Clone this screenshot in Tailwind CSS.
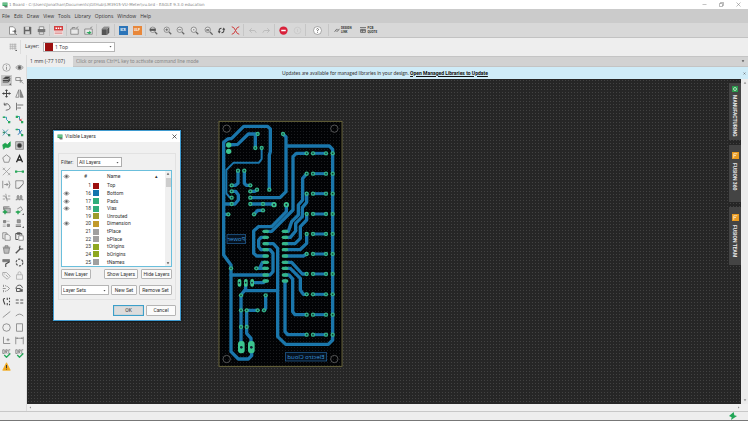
<!DOCTYPE html>
<html lang="en">
<head>
<meta charset="utf-8">
<title>1 Board - EAGLE 9.3.0 education</title>
<script src="https://cdn.jsdelivr.net/npm/@tailwindcss/browser@4"></script>
</head>
<body class="flex h-screen flex-col overflow-hidden bg-[#eeeeee] font-['Open_Sans',sans-serif] text-[5px] leading-[7px] text-[#333]">

<!-- shared symbols -->
<svg class="hidden">
  <symbol id="eye" viewBox="0 0 12 12"><path d="M1 6Q6 0 11 6Q6 12 1 6Z" fill="#ddd" stroke="#888"/><circle cx="6" cy="6" r="2" fill="#555"/></symbol>
  <symbol id="mag" viewBox="0 0 12 12"><circle cx="5" cy="5" r="3.6" fill="#e6e6e6" stroke="#777"/><path d="M8 8l3 3" stroke="#666" stroke-width="1.6"/></symbol>
  <symbol id="caret" viewBox="0 0 6 6"><path d="M1 2h4L3 5z" fill="#555"/></symbol>
  <symbol id="app" viewBox="0 0 12 12"><rect x="1" y="1" width="10" height="7" fill="#3aa564"/><path d="M2 3h8M2 5h8" stroke="#9bd8b1"/><path d="M4 8h7v3H6z" fill="#777"/></symbol>
  <symbol id="check" viewBox="0 0 12 12"><path d="M1 1v5h2V1zM5 6V1h2v2H5l2 3M11 1H9v5h2" fill="none" stroke="#777"/><path d="M3 8l3 3 5-5" fill="none" stroke="#25a95a" stroke-width="1.8"/></symbol>
</svg>

<header class="flex h-[9px] shrink-0 items-center bg-white pl-[2px] text-[#888]">
  <svg class="mr-px size-[6px]"><use href="#app"/></svg>
  <h1 class="font-['DejaVu_Sans',sans-serif] text-[4px] whitespace-nowrap">1 Board - C:\Users\Jonathan\Documents\GitHub\LM3915-VU-Meter\vu.brd - EAGLE 9.3.0 education</h1>
  <div class="ml-auto flex items-center gap-[12px] pr-[7px]">
    <button aria-label="Minimize"><svg class="size-[5px]" viewBox="0 0 10 10"><path d="M1 5h8" stroke="#888"/></svg></button>
    <button aria-label="Restore"><svg class="size-[5px]" viewBox="0 0 10 10"><path d="M1 3h6v6H1zM3 3V1h6v6H7" fill="none" stroke="#777"/></svg></button>
    <button aria-label="Close"><svg class="size-[5px]" viewBox="0 0 10 10"><path d="M1 1l8 8M9 1l-8 8" stroke="#777"/></svg></button>
  </div>
</header>

<nav class="flex h-[14px] shrink-0 items-center gap-[4px] bg-[#cbcbcb] pl-[2px]">
  <a href="#">File</a><a href="#">Edit</a><a href="#">Draw</a><a href="#">View</a><a href="#">Tools</a><a href="#">Library</a><a href="#">Options</a><a href="#">Window</a><a href="#">Help</a>
</nav>

<div class="flex h-[15px] shrink-0 items-center border-b border-[#c2c2c2] bg-[#d8d8d8] pl-[6px] [&_svg]:mx-auto">
  <div class="flex w-[42px] justify-between">
    <button class="w-[13px]" aria-label="New"><svg class="size-[9px]" viewBox="0 0 12 12"><path d="M2 1h5l3 3v7H2z" fill="#fff" stroke="#777"/><path d="M6 7h5M9 5v5" stroke="#444"/><path d="M10 11h2v1z" fill="#333"/></svg></button>
    <button class="w-[13px]" aria-label="Save"><svg class="size-[9px]" viewBox="0 0 12 12"><path d="M1 1h9l1 1v9H1z" fill="#666"/><path d="M3 1h5v4H3zM3 7h6v4H3z" fill="#d8d8d8"/></svg></button>
    <button class="w-[13px]" aria-label="Print"><svg class="size-[9px]" viewBox="0 0 12 12"><path d="M3 1h6v4H3zM3 8h6v3H3z" fill="#eee" stroke="#777"/><path d="M1 4h10v4H1z" fill="#777"/></svg></button>
  </div>
  <span class="mx-px h-[12px] w-px bg-[#c6c6c6]"></span>
  <button class="w-[14px]" aria-label="CAM processor"><svg class="size-[9px]" viewBox="0 0 12 12"><rect width="12" height="12" fill="#f3dede"/><rect width="12" height="6" fill="#d43c3c"/><path d="M2 3h2M5 3h2M8 3h2" stroke="#fff" stroke-width="2"/><path d="M1 8h10M1 10h10" stroke="#d88"/></svg></button>
  <span class="mx-px h-[12px] w-px bg-[#c6c6c6]"></span>
  <div class="flex w-[27px] justify-between">
    <button class="w-[13px]" aria-label="Schematic"><svg class="size-[9px]" viewBox="0 0 12 12"><path d="M1 4h10v7H1zM3 4V2h4M8 3l3-2" fill="#e8e8e8" stroke="#777"/></svg></button>
    <button class="w-[13px]" aria-label="Board"><svg class="size-[9px]" viewBox="0 0 12 12"><path d="M1 4h10v7H1zM8 3l3-2" fill="#e8e8e8" stroke="#777"/><path d="M3 8h4V6l3 3-3 2" fill="#2ba85c"/></svg></button>
  </div>
  <span class="mx-px h-[12px] w-px bg-[#c6c6c6]"></span>
  <button class="w-[15px]" aria-label="Library"><svg class="size-[9px]" viewBox="0 0 12 12"><path d="M1 4l3-3h7v8l-3 3H1z" fill="#555"/><path d="M1 4h7v8M8 4l3-3M2 3h7M3 2h7" stroke="#bbb" stroke-width=".7" fill="none"/></svg></button>
  <span class="mx-px h-[12px] w-px bg-[#c6c6c6]"></span>
  <div class="flex w-[28px] justify-between text-[3px] leading-[9px] font-bold text-white">
    <button class="mx-auto h-[9px] w-[9px] bg-[#2b74b8]">SCR</button>
    <button class="mx-auto h-[9px] w-[9px] bg-[#e8873a]">ULP</button>
  </div>
  <span class="mx-px h-[12px] w-px bg-[#c6c6c6]"></span>
  <div class="flex w-[95px] justify-between">
    <button class="w-[13px]" aria-label="Zoom to fit"><svg class="size-[9px]" viewBox="0 0 12 12"><use href="#mag"/><path d="M1 5h8" stroke="#555" stroke-width="3"/></svg></button>
    <button class="w-[13px]" aria-label="Zoom in"><svg class="size-[9px]" viewBox="0 0 12 12"><use href="#mag"/><path d="M3 5h4M5 3v4" stroke="#555"/></svg></button>
    <button class="w-[13px]" aria-label="Zoom out"><svg class="size-[9px]" viewBox="0 0 12 12"><use href="#mag"/><path d="M3 5h4" stroke="#555"/></svg></button>
    <button class="w-[13px]" aria-label="Redraw"><svg class="size-[9px]" viewBox="0 0 12 12"><use href="#mag"/><circle cx="5" cy="5" r="1" fill="#888"/></svg></button>
    <button class="w-[13px]" aria-label="Zoom select"><svg class="size-[9px]" viewBox="0 0 12 12"><use href="#mag"/><path d="M3 4h4v3H3z" fill="#888"/><path d="M10 11h2v1z" fill="#333"/></svg></button>
    <button class="w-[13px]" aria-label="Refresh"><svg class="size-[9px]" viewBox="0 0 12 12"><path d="M6 3Q2 3 3 8M6 9q4 0 3-5" fill="none" stroke="#444" stroke-width="1.4"/><path d="M1 7h4l-2 3zM7 5h4L9 2z" fill="#444"/></svg></button>
    <button class="w-[13px]" aria-label="Cross probe"><svg class="size-[9px]" viewBox="0 0 12 12"><path d="M1 1q3 0 5 5t5 5M11 1Q8 1 6 6t-5 5" fill="none" stroke="#d03a3a" stroke-width="1.3"/></svg></button>
  </div>
  <span class="mx-px h-[12px] w-px bg-[#c6c6c6]"></span>
  <div class="flex w-[28px] justify-between">
    <button class="w-[14px]" aria-label="Undo"><svg class="size-[9px]" viewBox="0 0 12 12"><path d="M5 3L2 6l3 3M2 6h7l2 3" fill="none" stroke="#bbb" stroke-width="1.3"/></svg></button>
    <button class="w-[14px]" aria-label="Redo"><svg class="size-[9px]" viewBox="0 0 12 12"><path d="M7 3l3 3-3 3M10 6H3L1 9" fill="none" stroke="#bbb" stroke-width="1.3"/></svg></button>
  </div>
  <span class="mx-px h-[12px] w-px bg-[#c6c6c6]"></span>
  <div class="flex w-[28px] justify-between">
    <button class="w-[14px]" aria-label="Stop"><svg class="size-[9px]" viewBox="0 0 12 12"><circle cx="6" cy="6" r="5.5" fill="#d8213a"/><path d="M3 6h6" stroke="#fff" stroke-width="2"/></svg></button>
    <button class="w-[14px]" aria-label="Go"><svg class="size-[9px]" viewBox="0 0 12 12"><circle cx="6" cy="6" r="4.5" fill="none" stroke="#c8c8c8"/><path d="M6 4v4" stroke="#c8c8c8"/></svg></button>
  </div>
  <span class="mx-px h-[12px] w-px bg-[#c6c6c6]"></span>
  <button class="w-[20px]" aria-label="Help"><svg class="size-[9px]" viewBox="0 0 12 12"><circle cx="6" cy="6" r="5.3" fill="#fff" stroke="#777" stroke-width=".8"/><path d="M4.500 4.500Q6 2 7.500 4.500Q7 6 6 6v1M6 8v1" fill="none" stroke="#444"/></svg></button>
  <span class="mx-px h-[12px] w-px bg-[#c6c6c6]"></span>
  <button class="ml-[4px] flex items-center gap-px text-left font-['Roboto',sans-serif] text-[3px] leading-[4px] font-bold"><svg class="size-[6px]" viewBox="0 0 10 10"><path d="M1 8l3-4h2M4 7h2l3-4" fill="none" stroke="#666" stroke-width="1.500"/></svg><span>DESIGN<br>LINK</span></button>
  <button class="ml-[8px] flex items-center gap-[2px] text-left font-['Roboto',sans-serif] text-[3px] leading-[4px] font-bold"><svg class="size-[6px]" viewBox="0 0 10 10"><path d="M0 1h10M1 4h8v5H1zM4 4v5M1 6h8" fill="none" stroke="#666" stroke-width="1.500"/></svg><span>PCB<br>QUOTE</span></button>
</div>

<div class="flex h-[17px] shrink-0 items-center pl-[9px]">
  <button aria-label="Grid"><svg class="size-[8px]" viewBox="0 0 12 12"><path d="M1 2h10M1 5h10M1 8h10M2 1v9M5 1v9M8 1v9M10 1v9" stroke="#aaa"/><path d="M9 12h3l-1-2z" fill="#333"/></svg></button>
  <span class="mx-[3px] h-[14px] w-px bg-[#ddd]"></span>
  <label for="layer" class="w-[19px] pl-px">Layer:</label>
  <div class="grid w-[72px] items-center border border-[#b5b5b5] bg-white [&>*]:[grid-area:1/1]">
    <select id="layer" class="h-[8px] appearance-none pl-[11px] leading-[8px]"><option>1 Top</option></select>
    <span class="pointer-events-none ml-px size-[8px] bg-[#9c1010]"></span>
    <svg class="pointer-events-none mr-[2px] size-[3px] justify-self-end"><use href="#caret"/></svg>
  </div>
</div>

<div class="flex min-h-0 flex-1">
  <aside class="flex w-[27px] shrink-0 flex-col border-r border-[#dcdcdc] pt-[6px]">
    <div class="grid auto-rows-[13px] grid-cols-2 place-items-center [&_svg]:size-[9px] [&_svg]:fill-none [&_svg]:stroke-[#777]">
      <button aria-label="Info"><svg viewBox="0 0 12 12"><circle cx="6" cy="6" r="5" stroke-width=".7"/><path d="M6 3v1M6 5v4"/></svg></button>
      <button aria-label="Show"><svg viewBox="0 0 12 12"><use href="#eye"/></svg></button>
      <button aria-label="Visible layers" class="bg-[#c9c9c9] p-px"><svg viewBox="0 0 12 12"><path d="M1 4l4-3h6L8 4z" fill="#333"/><path d="M1 6h7l3-3M1 8h7l3-3" stroke="#444" stroke-width="1.400"/><path d="M10 12h2v-2z" fill="#333"/></svg></button>
      <button aria-label="Mark"><svg viewBox="0 0 12 12"><path d="M1 2h6v4H1zM7 6l4 4M7 6v3M7 6h3"/></svg></button>
      <button aria-label="Move"><svg viewBox="0 0 12 12"><path d="M6 1v10M1 6h10M4.500 2.500L6 1l1.500 1.500M4.500 9.500L6 11l1.500-1.500M2.500 4.500L1 6l1.500 1.500M9.500 4.500L11 6l-1.500 1.500" stroke="#444" stroke-width="1.300"/></svg></button>
      <button aria-label="Mirror"><svg viewBox="0 0 12 12"><path d="M5 1v10H1z"/><path d="M7 1v10h4z" fill="#888"/></svg></button>
      <button aria-label="Rotate"><svg viewBox="0 0 12 12"><path d="M3 4q4-4 7 1t-5 6M3 1v3h3" stroke="#444"/></svg></button>
      <button aria-label="Align"><svg viewBox="0 0 12 12"><path d="M2 1v10M3 4h8M3 8h5" stroke-width="1.300"/></svg></button>
      <button aria-label="Route"><svg viewBox="0 0 12 12"><path d="M2 3h4v3l3 3h2" stroke="#2a9bb5" stroke-width="1.300"/><path d="M1 2h3v2H1zM8 8h3v3H8z" fill="#2ba85c" stroke="none"/></svg></button>
      <button aria-label="Ripup"><svg viewBox="0 0 12 12"><path d="M2 2h4v4l4 4" stroke="#2a9bb5" stroke-width="1.300"/><path d="M1 1h3v3H1zM8 8h3v3H8z" fill="#2ba85c" stroke="none"/><path d="M6 5l3 3M9 5L6 8" stroke="#d33"/></svg></button>
      <button aria-label="Fanout"><svg viewBox="0 0 12 12"><path d="M1 2l9 9M1 10l7-8" stroke="#5aa0b5" stroke-width="1.300"/><path d="M1 5h3v2H1zM8 8h3v3H8z" fill="#3b8f6a" stroke="none"/></svg></button>
      <button aria-label="Autorouter"><svg viewBox="0 0 12 12"><path d="M1 2h5v3l4 5M4 9l5-6" stroke="#2a7ab5" stroke-width="1.300"/><path d="M1 1h3v2H1zM8 8h3v3H8z" fill="#2ba85c" stroke="none"/></svg></button>
      <button aria-label="Polygon pour"><svg viewBox="0 0 12 12"><path d="M1 5q4-4 6 0l4-4v6q-3 3-6 1l-3 3z" fill="#1fa34e" stroke="#1fa34e"/></svg></button>
      <button aria-label="Via"><svg viewBox="0 0 12 12"><rect x="1" y="1" width="10" height="10" fill="#ccc"/><circle cx="6" cy="6" r="3" fill="#333"/></svg></button>
      <button aria-label="Polygon"><svg viewBox="0 0 12 12"><path d="M6 1l5 4-2 6H3L1 5z"/></svg></button>
      <button aria-label="Text"><svg viewBox="0 0 12 12"><path d="M2 11L6 2l4 9M4 8h4" stroke="#222" stroke-width="1.700"/></svg></button>
      <button aria-label="Cross"><svg viewBox="0 0 12 12"><path d="M1 1l10 10M11 1L1 11M1 4l3-3M8 11l3-3" stroke="#999"/></svg></button>
      <button aria-label="Airwire"><svg viewBox="0 0 12 12"><path d="M2 6h8" stroke="#2ba85c"/><path d="M0 4.500h3v3H0zM9 4.500h3v3H9z" fill="#2ba85c" stroke="none"/></svg></button>
      <button aria-label="Pinswap"><svg viewBox="0 0 12 12"><path d="M1 1v10M3 6h5M6 4l2 2-2 2M9 1q3 5 0 10"/></svg></button>
      <button aria-label="Miter"><svg viewBox="0 0 12 12"><path d="M1 1h10v4L5 11H1zM4 11h2l5-6"/></svg></button>
      <button aria-label="Split"><svg viewBox="0 0 12 12"><path d="M1 4h3l2 4h5M1 8h3M8 4h3M5 1l2 10" stroke="#888"/></svg></button>
      <button aria-label="Meander"><svg viewBox="0 0 12 12"><path d="M1 9h2V4q1-2 2 0v5h2V4q1-2 2 0v5h2" stroke-width="1.300"/></svg></button>
      <button aria-label="Add part"><svg viewBox="0 0 12 12"><path d="M3 3h8v6H3zM2 5V1h8" fill="#bbb"/><path d="M4 5v6M1 8h6" stroke="#1fa34e" stroke-width="1.800"/></svg></button>
      <button aria-label="Replace part"><svg viewBox="0 0 12 12"><path d="M3 4l5-3 2 4-3 2"/><path d="M4 6v5M1 8h6" stroke="#1fa34e" stroke-width="1.800"/><path d="M10 12h2v-2z" fill="#333"/></svg></button>
      <button aria-label="Name"><svg viewBox="0 0 12 12"><path d="M2 2h3v3H2zM7 7h3v3H7z" fill="#888"/><path d="M6 3h4M1 8h4M1 10h4" stroke="#aaa"/></svg></button>
      <button aria-label="Value"><svg viewBox="0 0 12 12"><path d="M3 1h4v4H3z" fill="#999"/><path d="M1 8h7M1 10h7" stroke-width="1.300"/><path d="M10 12h2v-2z" fill="#333"/></svg></button>
      <button aria-label="Copy"><svg viewBox="0 0 12 12"><path d="M3 9H1V1h5l1 2M4 3h4l3 3v5H4z"/></svg></button>
      <button aria-label="Paste"><svg viewBox="0 0 12 12"><path d="M4 10H1V2h8v2M3 1h4v2H3z" stroke="#555" stroke-width="1.300"/><path d="M5 5h6v6H5z" fill="#fff"/></svg></button>
      <button aria-label="Delete"><svg viewBox="0 0 12 12"><path d="M1 3h10M4 3V1h4v2M2 4l1 7h6l1-7z" fill="#bbb"/></svg></button>
      <button aria-label="Change"><svg viewBox="0 0 12 12"><path d="M1 11l6-6" stroke="#555" stroke-width="2"/><path d="M7 1q-2 3 0 4t4 0" stroke="#555" stroke-width="1.800"/></svg></button>
      <button aria-label="Paint"><svg viewBox="0 0 12 12"><path d="M1 2h9v3H1z" fill="#777"/><path d="M10 5L5 8v4" stroke="#444" stroke-width="1.400"/></svg></button>
      <button aria-label="Group"><svg viewBox="0 0 12 12"><circle cx="6" cy="6" r="4.500" stroke="#555" stroke-width="1.600" stroke-dasharray="3 1.700"/></svg></button>
      <button aria-label="Attribute"><svg viewBox="0 0 12 12"><path d="M1 2h5l5 5-4 4-6-5zM3 4h1M5 5l3 3" stroke="#999"/></svg></button>
      <button aria-label="Lock"><svg viewBox="0 0 12 12"><path d="M2 5h8v6H2zM4 5V2q2-2 4 0v3" stroke="#aaa"/></svg></button>
      <button aria-label="Optimize"><svg viewBox="0 0 12 12"><path d="M2 1v3M2 8v3M1 6h4M7 3l3 3-3 3M4 2l2 1M4 10l2-1"/></svg></button>
      <button aria-label="Arc turn"><svg viewBox="0 0 12 12"><path d="M1 6q2-6 7-4l2 3M2 6h5v4H2z" stroke="#555" stroke-width="1.300"/><path d="M7 7h3v3H7z" fill="#555"/></svg></button>
      <button aria-label="Slice"><svg viewBox="0 0 12 12"><path d="M4 2Q1 2 2 5t2 5M7 1v3M7 8v3M10 1v2M10 5v2M10 9v2" stroke="#444" stroke-width="1.400"/></svg></button>
      <button aria-label="Gap"><svg viewBox="0 0 12 12"><path d="M1 4h4M7 4h4M1 8h4M7 8h4" stroke="#555" stroke-width="1.300"/></svg></button>
      <button aria-label="Line"><svg viewBox="0 0 12 12"><path d="M1 10L11 2"/></svg></button>
      <button aria-label="Arc"><svg viewBox="0 0 12 12"><path d="M1 8q5-5 10 0"/></svg></button>
      <button aria-label="Circle"><svg viewBox="0 0 12 12"><circle cx="6" cy="6" r="5"/></svg></button>
      <button aria-label="Rectangle"><svg viewBox="0 0 12 12"><path d="M2 1h8v10H2z"/></svg></button>
      <button aria-label="Origin"><svg viewBox="0 0 12 12"><path d="M2 1v9h9M6 5h4M8 3v4"/></svg></button>
      <button aria-label="Dimension"><svg viewBox="0 0 12 12"><path d="M1 1v10M11 1v10M1 3h10M3 2v2M9 2v2"/></svg></button>
      <button aria-label="ERC"><svg viewBox="0 0 12 12"><use href="#check"/></svg></button>
      <button aria-label="DRC"><svg viewBox="0 0 12 12"><use href="#check"/></svg></button>
      <button aria-label="Errors"><svg viewBox="0 0 12 12"><path d="M6 1l5 10H1z" fill="#f2a91c" stroke="#f2a91c"/><path d="M6 4v4M6 9v1" stroke="#333" stroke-width="1.300"/></svg></button>
    </div>
  </aside>

  <main class="flex min-w-0 flex-1 flex-col">
    <div class="flex h-[12px] shrink-0 items-center">
      <output class="w-[46px] pl-[3px]">1 mm (-77 107)</output>
      <input aria-label="Command line" class="h-[11px] min-w-0 flex-1 border-y border-[#c4c4c4] bg-[#d2d2d2] pl-[3px] font-['Lato',sans-serif] placeholder:text-[#888]" placeholder="Click or press Ctrl+L key to activate command line mode">
      <button class="flex h-[11px] w-[7px] items-center border-y border-[#c4c4c4] bg-[#d2d2d2]" aria-label="History"><svg class="size-[4px]"><use href="#caret"/></svg></button>
    </div>
    <div class="flex h-[12px] shrink-0 items-center justify-center bg-[#cfecf8] font-['Lato',sans-serif]">
      <p class="flex-1 text-center whitespace-nowrap">Updates are available for managed libraries in your design. <a href="#" class="font-['Roboto',sans-serif] font-bold text-[#111] underline">Open Managed Libraries to Update</a></p>
      <button aria-label="Dismiss" class="pr-[2px]"><svg class="size-[3px]" viewBox="0 0 6 6"><path d="M1 1l4 4M5 1L1 5" stroke="#555"/></svg></button>
    </div>
    <div class="flex min-h-0 flex-1">
      <div class="relative min-w-0 flex-1 overflow-hidden bg-[#262626] bg-[radial-gradient(circle,#424242_0.500px,transparent_1px)] bg-[size:3px_3px]">
        <svg class="absolute top-[36px] left-[188px] h-[260px] w-[130px]" viewBox="0 0 390 780" role="img" aria-label="Board layout">
          <defs>
            <pattern id="dots" width="9" height="9" patternUnits="userSpaceOnUse"><rect width="9" height="9" fill="#020305"/><rect x="3" y="3" width="2.500" height="2.500" fill="#24272a"/></pattern>
            <g id="pad"><circle r="6.500" fill="#35b58a"/><circle r="2.500" fill="#0d3a35"/></g>
            <rect id="pin" x="-10" y="-5" width="20" height="10" rx="5" fill="#35b58a"/>
            <g id="channel"><path d="M294 0H333" stroke="#1a76ab" stroke-width="9"/><use href="#pad" x="275"/><use href="#pad" x="294"/><use href="#pad" x="333"/><use href="#pad" x="353"/></g>
          </defs>
          <rect x="12" y="19" width="369" height="735" fill="url(#dots)" stroke="#76713f" stroke-width="2.500"/>
          <g fill="none" stroke="#777" stroke-width="2"><circle cx="35" cy="41" r="11"/><circle cx="358" cy="41" r="11"/><circle cx="35" cy="732" r="11"/><circle cx="358" cy="732" r="11"/></g>
          <g fill="none" stroke="#1a76ab" stroke-width="10" stroke-linejoin="round" stroke-linecap="round">
            <path d="M163 224V120L166 110V42L158 34H86L50 70L38 72L26 82V420L48 450V710L70 732H100L110 722V700"/>
            <path d="M26 267H50M26 298H40M41 90L68 88L100 57H128M121 57V99"/>
            <path d="M140 99V132L132 143H56L34 165V235L44 247H50" stroke-width="6"/>
            <path d="M69 167V205L62 211H50M88 167V205L94 211H106M50 229H62L70 240V255L60 267H50M106 229H120L126 224"/>
            <path d="M106 248H195L213 230V66L204 57M213 93H343L353 103V675L340 688H212L188 665V400L175 386H152"/>
            <path d="M106 267H177M117 298L128 286H144M214 270V290L170 335H130L116 348V415L125 423H152"/>
            <path d="M152 367H138L131 375V395L138 404H165L174 415V470L165 480H48M152 349H170L234 285V125L244 115H275"/>
            <path d="M210 349H220L230 320L250 300V270L263 255V190L275 176M210 367H226L242 348V325L262 305V278L275 262V236M210 386H240L256 370V335L275 315V297"/>
            <path d="M210 404H255L275 385V357M210 423H265L275 417M210 442H230L262 477H275M210 460H226L256 490V525L265 538H275M210 480H222L233 492V590L240 599H275M210 498V650L218 659H275"/>
            <path d="M152 442H142L134 460M124 460H152M110 503H145L152 498M92 510V522L78 540V700M90 527H188M152 542V580L147 586M128 586H95V655L108 670V700"/>
          </g>
          <use href="#channel" y="115"/><use href="#channel" y="176"/><use href="#channel" y="236"/><use href="#channel" y="297"/><use href="#channel" y="357"/><use href="#channel" y="417"/><use href="#channel" y="477"/><use href="#channel" y="538"/><use href="#channel" y="599"/><use href="#channel" y="659"/>
          <g>
            <use href="#pad" x="128" y="57"/><use href="#pad" x="204" y="57"/><use href="#pad" x="121" y="99"/><use href="#pad" x="140" y="99"/><use href="#pad" x="69" y="167"/><use href="#pad" x="88" y="167"/>
            <use href="#pad" x="50" y="211"/><use href="#pad" x="50" y="229"/><use href="#pad" x="50" y="248"/><use href="#pad" x="50" y="267"/><use href="#pad" x="106" y="211"/><use href="#pad" x="106" y="229"/><use href="#pad" x="106" y="248"/><use href="#pad" x="106" y="267"/>
            <use href="#pad" x="126" y="224"/><use href="#pad" x="163" y="224"/><use href="#pad" x="144" y="267"/><use href="#pad" x="144" y="286"/><use href="#pad" x="117" y="298"/><use href="#pad" x="40" y="298"/>
            <use href="#pad" x="48" y="460"/><use href="#pad" x="124" y="460"/><use href="#pad" x="78" y="541"/><use href="#pad" x="152" y="541"/><use href="#pad" x="78" y="586"/><use href="#pad" x="95" y="586"/><use href="#pad" x="128" y="586"/><use href="#pad" x="147" y="586"/><use href="#pad" x="78" y="636"/><use href="#pad" x="95" y="636"/>
          </g>
          <g fill="#3cc58f"><circle cx="41" cy="90" r="8"/><circle cx="41" cy="109" r="8"/><circle cx="177" cy="269" r="8"/><circle cx="214" cy="269" r="8"/>
            <rect x="68" y="492" width="11" height="23" rx="5"/><rect x="87" y="492" width="11" height="23" rx="5"/><rect x="106" y="492" width="11" height="23" rx="5"/>
            <rect x="69" y="678" width="20" height="37" rx="9"/><rect x="99" y="678" width="20" height="37" rx="9"/></g>
          <g fill="#123"><circle cx="177" cy="269" r="3"/><circle cx="214" cy="269" r="3"/><circle cx="73" cy="503" r="2.500"/><circle cx="92" cy="503" r="2.500"/><circle cx="111" cy="503" r="2.500"/><circle cx="79" cy="697" r="4"/><circle cx="109" cy="697" r="4"/></g>
          <g><use href="#pin" x="152" y="349"/><use href="#pin" x="152" y="367"/><use href="#pin" x="152" y="386"/><use href="#pin" x="152" y="404"/><use href="#pin" x="152" y="423"/><use href="#pin" x="152" y="442"/><use href="#pin" x="152" y="460"/><use href="#pin" x="152" y="480"/><use href="#pin" x="152" y="498"/>
            <use href="#pin" x="210" y="349"/><use href="#pin" x="210" y="367"/><use href="#pin" x="210" y="386"/><use href="#pin" x="210" y="404"/><use href="#pin" x="210" y="423"/><use href="#pin" x="210" y="442"/><use href="#pin" x="210" y="460"/><use href="#pin" x="210" y="480"/><use href="#pin" x="210" y="498"/></g>
          <g fill="#06121f" stroke="#2567a3" stroke-width="2"><rect x="36" y="359" width="56" height="26"/><rect x="211" y="713" width="124" height="25"/></g>
          <!-- bottom-side lettering reads mirrored from above -->
          <g transform="scale(-1 1)" fill="#3a93dc" font-family="Open Sans, sans-serif" font-size="18" text-anchor="middle"><text x="-64" y="378">Power</text><text x="-273" y="732">Electro Cloud</text></g>
        </svg>

        <nav class="absolute top-[4px] right-0 flex w-[12px] flex-col gap-[5px] font-['Roboto',sans-serif] leading-[12px] font-bold text-[#e8e8e8]">
          <a href="#" class="flex h-[57px] flex-col items-center gap-[3px] bg-[#444] pt-[3px]"><svg class="size-[6px] shrink-0" viewBox="0 0 12 12"><rect width="12" height="12" fill="#2a9a4c"/><circle cx="6" cy="6" r="3" fill="none" stroke="#d5f2dd" stroke-width="1.500"/></svg><span class="[writing-mode:vertical-rl]">MANUFACTURING</span></a>
          <a href="#" class="flex h-[57px] flex-col items-center gap-[4px] bg-[#444] pt-[7px]"><svg class="size-[7px] shrink-0" viewBox="0 0 12 12"><rect width="12" height="12" fill="#e99a1f"/><path d="M3 10V3h6M3 6h4" fill="none" stroke="#fbe3b8" stroke-width="1.500"/></svg><span class="[writing-mode:vertical-rl]">FUSION 360</span></a>
          <a href="#" class="flex h-[58px] flex-col items-center gap-[4px] bg-[#444] pt-[7px]"><svg class="size-[7px] shrink-0" viewBox="0 0 12 12"><rect width="12" height="12" fill="#e99a1f"/><path d="M3 10V3h6M3 6h4" fill="none" stroke="#fbe3b8" stroke-width="1.500"/></svg><span class="[writing-mode:vertical-rl]">FUSION TEAM</span></a>
        </nav>

        <section role="dialog" aria-labelledby="dlg" class="absolute top-[51px] left-[26px] w-[128px] border border-[#3f9bd0] bg-[#f0f0f0] font-['Roboto',sans-serif] shadow-[0_0_2px_#000]">
          <div class="flex h-[11px] items-center gap-[2px] bg-white px-[3px]">
            <svg class="size-[6px]"><use href="#app"/></svg><h2 id="dlg">Visible Layers</h2>
            <button aria-label="Close dialog" class="ml-auto"><svg class="size-[5px]" viewBox="0 0 10 10"><path d="M1 1l8 8M9 1l-8 8" stroke="#333" stroke-width="1.500"/></svg></button>
          </div>
          <div class="mx-[4px] mt-[11px] border border-[#e2e2e2] pt-[3px] pr-[3px] pb-[4px] pl-[2px]">
            <div class="flex items-center">
              <label for="filter" class="w-[16px]">Filter:</label>
              <div class="grid w-[45px] items-center border border-[#adadad] bg-white [&>*]:[grid-area:1/1]">
                <select id="filter" class="h-[8px] appearance-none pl-px leading-[8px]"><option>All Layers</option></select>
                <svg class="pointer-events-none mr-[2px] size-[3px] justify-self-end"><use href="#caret"/></svg>
              </div>
            </div>
            <div class="mt-[3px] flex h-[97px] border border-[#6bbfdc] bg-white">
              <div class="min-w-0 flex-1">
              <table class="h-[95px] w-full table-fixed border-collapse text-left leading-[7px] [&_td]:p-0 [&_th]:p-0 [&_th]:font-normal [&_svg]:mx-auto [&_svg]:size-[7px]">
                <colgroup><col class="w-[9px]"><col class="w-[20px]"><col class="w-[9px]"><col><col class="w-[18px]"></colgroup>
                <thead><tr class="h-[11px]"><th><svg><use href="#eye"/></svg></th><th class="pl-[13px]!">#</th><th></th><th class="pl-[7px]!">Name</th><th class="text-center">▴</th></tr></thead>
                <tbody class="[&_td:nth-child(2)]:text-right [&_td:nth-child(4)]:pl-[7px] [&_i]:ml-[2px] [&_i]:block [&_i]:size-[6px]">
                  <tr><td></td><td>1</td><td><i class="bg-[#9c1010]"></i></td><td>Top</td><td></td></tr>
                  <tr><td><svg><use href="#eye"/></svg></td><td>16</td><td><i class="bg-[#1274ad]"></i></td><td>Bottom</td><td></td></tr>
                  <tr><td><svg><use href="#eye"/></svg></td><td>17</td><td><i class="bg-[#2fae7c]"></i></td><td>Pads</td><td></td></tr>
                  <tr><td><svg><use href="#eye"/></svg></td><td>18</td><td><i class="bg-[#2fae7c]"></i></td><td>Vias</td><td></td></tr>
                  <tr><td></td><td>19</td><td><i class="bg-[#9c9c2c]"></i></td><td>Unrouted</td><td></td></tr>
                  <tr><td><svg><use href="#eye"/></svg></td><td>20</td><td><i class="bg-[#c09a2c]"></i></td><td>Dimension</td><td></td></tr>
                  <tr><td></td><td>21</td><td><i class="bg-[#a0a0a0]"></i></td><td>tPlace</td><td></td></tr>
                  <tr><td></td><td>22</td><td><i class="bg-[#a0a0a0]"></i></td><td>bPlace</td><td></td></tr>
                  <tr><td></td><td>23</td><td><i class="bg-[#8ea822]"></i></td><td>tOrigins</td><td></td></tr>
                  <tr><td></td><td>24</td><td><i class="bg-[#8ea822]"></i></td><td>bOrigins</td><td></td></tr>
                  <tr><td></td><td>25</td><td><i class="bg-[#a0a0a0]"></i></td><td>tNames</td><td></td></tr>
                </tbody>
              </table>
              </div>
              <div class="flex w-[6px] flex-col items-center justify-between bg-[#f0f0f0] py-px">
                <div><svg class="mb-[2px] size-[4px] rotate-180"><use href="#caret"/></svg><div class="h-[9px] w-[5px] bg-[#cdcdcd]"></div></div>
                <svg class="size-[4px]"><use href="#caret"/></svg>
              </div>
            </div>
            <div class="mt-[2px] flex h-[10px] gap-[3px] [&_button]:rounded-[1px] [&_button]:border [&_button]:border-[#b5b5b5] [&_button]:bg-[#fbfbfb]">
              <button class="mr-auto w-[30px]">New Layer</button><button class="w-[34px]">Show Layers</button><button class="w-[31px]">Hide Layers</button>
            </div>
            <div class="mt-[6px] flex h-[10px] gap-[2px] [&_button]:rounded-[1px] [&_button]:border [&_button]:border-[#b5b5b5] [&_button]:bg-[#fbfbfb]">
              <div class="grid flex-1 items-center border border-[#b5b5b5] bg-white [&>*]:[grid-area:1/1]">
                <select aria-label="Layer sets" class="h-[8px] appearance-none pl-px leading-[8px]"><option>Layer Sets</option></select>
                <svg class="pointer-events-none mr-[2px] size-[3px] justify-self-end"><use href="#caret"/></svg>
              </div>
              <button class="w-[26px]">New Set</button><button class="w-[33px]">Remove Set</button>
            </div>
          </div>
          <div class="mt-[5px] mb-[4px] flex h-[11px] justify-end gap-[2px] pr-[4px]">
            <button class="w-[31px] border border-[#3c9fc9] bg-[#dcdcdc] shadow-[inset_0_0_1px_#3c9fc9]">OK</button><button class="w-[30px] rounded-[1px] border border-[#b5b5b5] bg-[#fbfbfb]">Cancel</button>
          </div>
        </section>
      </div>
      <div class="flex w-[7px] shrink-0 flex-col items-center justify-between bg-[#ececec] py-[2px] opacity-60"><svg class="size-[4px] rotate-180"><use href="#caret"/></svg><svg class="size-[4px]"><use href="#caret"/></svg></div>
    </div>
    <div class="flex h-[7px] shrink-0 items-center justify-between bg-[#f0f0f0] pr-[8px] pl-[2px]"><svg class="size-[3px] rotate-90 opacity-60"><use href="#caret"/></svg><svg class="size-[3px] -rotate-90 opacity-60"><use href="#caret"/></svg></div>
  </main>
</div>

<footer class="flex h-[10px] shrink-0 items-center justify-end border-t border-b border-t-[#c8c8c8] border-b-[#777] pr-[11px]">
  <svg class="size-[8px]" viewBox="0 0 12 12"><path d="M7 0L0 6l4 2-1 4 9-6-4-1z" fill="#22a657"/></svg>
</footer>
</body>
</html>
